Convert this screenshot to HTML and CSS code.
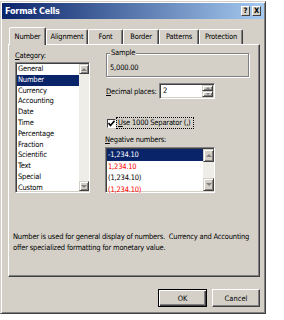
FILE: index.html
```html
<!DOCTYPE html>
<html lang="en">

<head>
    <meta charset="UTF-8">
    <meta name="viewport" content="width=device-width, initial-scale=1.0">
    <title>Format Cells</title>
    <link rel="stylesheet" href="styles.css">
</head>

<body>

    <div class="dialog">
        <!-- Title bar -->
        <div class="titlebar">
            <span class="title">Format Cells</span>
            <span class="tb-btns">
                <span class="tb-btn">?</span>
                <span class="tb-btn">X</span>
            </span>
        </div>

        <!-- Tabs -->
        <div class="tabs">
            <div class="tab active t-number">Number</div>
            <div class="tab t-align">Alignment</div>
            <div class="tab t-font">Font</div>
            <div class="tab t-border">Border</div>
            <div class="tab t-patterns">Patterns</div>
            <div class="tab t-protect">Protection</div>
        </div>

        <div class="panel">
            <div class="cols">
                <div class="cat">
                    <div class="lbl"><u>C</u>ategory:</div>
                    <div class="listbox cat-list">
                        <ul class="items">
                            <li>General</li>
                            <li class="sel">Number</li>
                            <li>Currency</li>
                            <li>Accounting</li>
                            <li>Date</li>
                            <li>Time</li>
                            <li>Percentage</li>
                            <li>Fraction</li>
                            <li>Scientific</li>
                            <li>Text</li>
                            <li>Special</li>
                            <li>Custom</li>
                        </ul>
                        <div class="vscroll">
                            <span class="sb-btn up"></span>
                            <span class="sb-track"></span>
                            <span class="sb-btn down"></span>
                        </div>
                    </div>
                </div>

                <div class="opts">
                    <fieldset class="sample">
                        <legend>Sample</legend>
                        <div class="sample-val">5,000.00</div>
                    </fieldset>

                    <div class="dec-row">
                        <label class="dec-lbl"><u>D</u>ecimal places:</label>
                        <div class="spin-input">
                            <span class="val">2</span>
                            <span class="spin">
                                <span class="sb-btn up"></span>
                                <span class="sb-btn down"></span>
                            </span>
                        </div>
                    </div>

                    <div class="check-row">
                        <span class="checkbox">
                            <svg width="7" height="7" viewBox="0 0 7 7">
                                <polyline points="0.5,3 2.5,5.5 6.5,0.8" fill="none" stroke="#000" stroke-width="1.6" />
                            </svg>
                        </span>
                        <span class="focus"><u>U</u>se 1000 Separator (,)</span>
                    </div>

                    <div class="lbl neg-lbl"><u>N</u>egative numbers:</div>
                    <div class="listbox neg-list">
                        <ul class="items">
                            <li class="sel">-1,234.10</li>
                            <li class="red">1,234.10</li>
                            <li>(1,234.10)</li>
                            <li class="red">(1,234.10)</li>
                        </ul>
                        <div class="vscroll">
                            <span class="sb-btn up"></span>
                            <span class="sb-track"></span>
                            <span class="sb-btn down"></span>
                        </div>
                    </div>
                </div>
            </div>

            <p class="desc">Number is used for general display of numbers.&nbsp; Currency and Accounting<br>offer specialized formatting for monetary value.</p>
        </div>

        <div class="buttons">
            <button class="btn default">OK</button>
            <button class="btn">Cancel</button>
        </div>
    </div>

</body>

</html>
```

FILE: styles.css
```css
* {
    box-sizing: border-box;
}

body {
    margin: 0;
    background: #fff;
    font-family: "DejaVu Sans Condensed", "DejaVu Sans", sans-serif;
    font-size: 7.5px;
    letter-spacing: -0.2px;
    color: #000;
}

.dialog {
    width: 266px;
    margin-top: 1px;
    padding: 1px 1px 6px 1px;
    background: #d4d0c8;
    border: 1px solid;
    border-color: #d4d0c8 #404040 #404040 #d4d0c8;
    box-shadow: inset 1px 1px #fff, inset -1px -1px #808080;
}

.titlebar {
    height: 16px;
    display: flex;
    align-items: center;
    justify-content: space-between;
    padding: 0 3px;
    background: linear-gradient(to right, #0a246a, #a6caf0);
    color: #fff;
    font-weight: bold;
    font-size: 9px;
}

.tb-btns {
    display: flex;
    gap: 2px;
}

.tb-btn {
    width: 9px;
    height: 10px;
    display: flex;
    align-items: center;
    justify-content: center;
    background: #d4d0c8;
    border: 1px solid;
    border-color: #fff #404040 #404040 #fff;
    color: #000;
    font-size: 7.5px;
    letter-spacing: 0;
    line-height: 1;
}

.tabs {
    display: flex;
    align-items: flex-end;
    height: 25px;
    padding-left: 7px;
}

.tab {
    flex: none;
    height: 15px;
    text-align: center;
    line-height: 13px;
    white-space: nowrap;
    border: 1px solid;
    border-bottom: none;
    border-color: #fff #404040 transparent #fff;
    border-radius: 2px 2px 0 0;
    box-shadow: inset -1px 0 #808080;
}

.tab.active {
    height: 18px;
    padding-top: 2px;
    margin-bottom: -1px;
    position: relative;
    z-index: 1;
    background: #d4d0c8;
}

.t-number { width: 37px; }
.t-align { width: 42px; }
.t-font { width: 35px; }
.t-border { width: 36px; }
.t-patterns { width: 40px; }
.t-protect { width: 44px; }

.panel {
    width: 252px;
    height: 233px;
    margin-left: 6px;
    display: flex;
    flex-direction: column;
    padding: 4px 0 23px 4px;
    border: 1px solid;
    border-color: #fff #404040 #404040 #fff;
    box-shadow: inset -1px -1px #808080;
}

.cols {
    display: grid;
    grid-template-columns: 75px 1fr;
    column-gap: 15px;
    margin-left: 2px;
}

.lbl {
    height: 13px;
    line-height: 13px;
    white-space: nowrap;
}

.listbox {
    display: flex;
    background: #fff;
    padding: 1px 0 1px 1px;
    border: 1px solid;
    border-color: #808080 #fff #fff #808080;
    box-shadow: inset 1px 1px #404040, inset -1px -1px #d4d0c8;
}

.cat-list {
    height: 131px;
}

.items {
    list-style: none;
    margin: 0;
    padding: 0;
    flex: 1;
}

.items li {
    line-height: 10.8px;
    padding-left: 1px;
    white-space: nowrap;
}

.items li.sel {
    background: #0a246a;
    color: #fff;
}

.items li.red {
    color: #ff0000;
}

.vscroll {
    width: 10px;
    display: flex;
    flex-direction: column;
    background: #eeede8;
}

.sb-track {
    flex: 1;
}

.sb-btn {
    height: 10px;
    display: flex;
    align-items: center;
    justify-content: center;
    background: #d4d0c8;
    border: 1px solid;
    border-color: #d4d0c8 #404040 #404040 #d4d0c8;
    box-shadow: inset 1px 1px #fff, inset -1px -1px #808080;
}

.sb-btn::after {
    content: "";
    border-left: 3px solid transparent;
    border-right: 3px solid transparent;
}

.sb-btn.up::after {
    border-bottom: 3px solid #808080;
}

.sb-btn.down::after {
    border-top: 3px solid #808080;
}

.opts {
    display: flex;
    flex-direction: column;
    align-items: flex-start;
}

.sample {
    width: 143px;
    height: 29px;
    min-width: 0;
    margin: -1px 0 0 1px;
    padding: 0 3px;
    border: 1px solid #808080;
    box-shadow: inset 1px 1px #fff, 1px 1px #fff;
}

.sample legend {
    padding: 0 1px;
    line-height: 10px;
    background: #d4d0c8;
}

.sample-val {
    margin-top: 4px;
    line-height: 11px;
}

.dec-row {
    display: flex;
    align-items: center;
    margin: 6px 0 0 1px;
}

.dec-lbl {
    width: 53px;
    white-space: nowrap;
}

.spin-input {
    width: 56px;
    height: 16px;
    display: flex;
    justify-content: space-between;
    align-items: stretch;
    padding: 1px 1px 1px 3px;
    background: #fff;
    border: 1px solid;
    border-color: #808080 #fff #fff #808080;
    box-shadow: inset 1px 1px #404040, inset -1px -1px #d4d0c8;
    line-height: 12px;
}

.spin {
    width: 11px;
    display: flex;
    flex-direction: column;
}

.spin .sb-btn {
    height: 6px;
}

.spin .sb-btn::after {
    border-left-width: 2px;
    border-right-width: 2px;
    border-top-width: 2px;
    border-bottom-width: 2px;
}

.check-row {
    display: flex;
    align-items: center;
    height: 12px;
    margin: 18px 0 0 2px;
}

.checkbox {
    width: 9px;
    height: 9px;
    display: flex;
    align-items: center;
    justify-content: center;
    background: #fff;
    border: 1px solid;
    border-color: #404040 #fff #fff #404040;
}

.focus {
    padding: 0 2px 0 1px;
    line-height: 10px;
    border: 1px dotted #000;
    white-space: nowrap;
}

.neg-lbl {
    height: 11px;
    line-height: 11px;
    margin-top: 5px;
}

.neg-list {
    width: 110px;
    height: 46px;
    margin-top: 2px;
}

.neg-list .items li {
    line-height: 11.5px;
}

.neg-list .vscroll {
    width: 11px;
}

.neg-list .sb-btn {
    height: 13px;
}

.desc {
    margin: auto 0 0 0;
    line-height: 11px;
    white-space: nowrap;
}

.buttons {
    display: flex;
    justify-content: flex-end;
    gap: 5px;
    margin-top: 12px;
    padding-right: 4px;
}

.btn {
    width: 48px;
    height: 18px;
    padding: 0;
    font: inherit;
    color: #000;
    background: #d4d0c8;
    border: 1px solid;
    border-color: #fff #404040 #404040 #fff;
    box-shadow: inset -1px -1px #808080;
}

.btn.default {
    width: 49px;
    border-color: #000;
    box-shadow: inset 1px 1px #fff, inset -1px -1px #404040, inset -2px -2px #808080;
}
```
